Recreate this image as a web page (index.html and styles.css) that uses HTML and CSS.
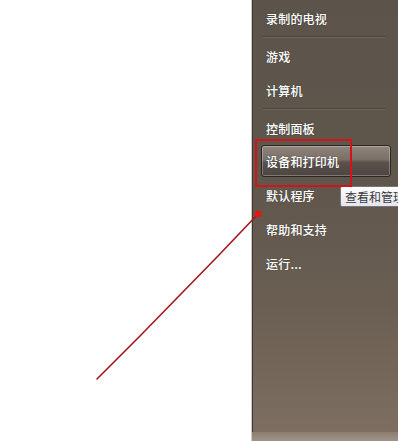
FILE: index.html
```html
<!DOCTYPE html>
<html>
<head>
<meta charset="utf-8">
<link rel="stylesheet" href="styles.css">
</head>
<body>
<div class="page">
  <div class="blank"></div>
  <div class="panel">
    <div class="item">录制的电视</div>
    <div class="sep"></div>
    <div class="item">游戏</div>
    <div class="item">计算机</div>
    <div class="sep"></div>
    <div class="item">控制面板</div>
    <div class="item active">设备和打印机</div>
    <div class="item">默认程序</div>
    <div class="item">帮助和支持</div>
    <div class="item">运行...</div>
    <div class="fill"></div>
    <div class="foot"></div>
  </div>
  <div class="tooltip">查看和管理</div>
  <div class="redbox"></div>
  <svg class="arrow" width="398" height="441" viewBox="0 0 398 441">
    <path d="M97 379 L140 336 L178 297 L218 256 L258 214" fill="none" stroke="#a8141c" stroke-width="1.6" stroke-linecap="round"/>
    <circle cx="258" cy="214" r="3.6" fill="#e01818"/>
  </svg>
</div>
</body>
</html>
```
FILE: styles.css
```css
html, body {
  margin: 0;
  padding: 0;
  background: #ffffff;
}
.page {
  position: relative;
  width: 398px;
  height: 441px;
  display: flex;
  overflow: hidden;
  font-family: "Noto Sans CJK SC", "Noto Sans", sans-serif;
}
.blank {
  width: 251px;
  flex: none;
  background: #ffffff;
}
.panel {
  flex: 1;
  display: flex;
  flex-direction: column;
  padding-top: 1px;
  border-left: 1px solid #cfcac4;
  box-shadow: inset 1px 0 0 #3e3731;
  background: linear-gradient(to bottom, #5c534a 0%, #5f564c 40%, #6b5f53 70%, #7e6f61 100%);
}
.item {
  height: 34px;
  display: flex;
  align-items: center;
  padding-left: 14px;
  font-size: 12px;
  font-weight: 500;
  color: #ffffff;
  letter-spacing: 0.2px;
  text-shadow: 0 0 1px rgba(0,0,0,0.7), 0 0 0.5px rgba(255,255,255,0.6);
  flex: none;
}
.item.active {
  height: 30px;
  margin: 0 7px 1px 9px;
  padding-left: 4px;
  border: 1px solid #2c2622;
  border-radius: 3px;
  box-shadow: inset 0 0 0 1px rgba(255,255,255,0.28);
  background: linear-gradient(to bottom, #8f857c 0%, #7a7067 45%, #5a514a 55%, #4d4540 100%);
}
.sep {
  height: 4px;
  flex: none;
  margin: 0 13px 0 11px;
  display: flex;
  flex-direction: column;
  justify-content: center;
}
.sep::before {
  content: "";
  height: 1px;
  background: #4a423b;
}
.sep::after {
  content: "";
  height: 1px;
  background: #6f665c;
}
.fill {
  flex: 1;
}
.foot {
  height: 9px;
  flex: none;
  background: linear-gradient(to bottom, #8a7d70, #a09487);
}
.tooltip {
  position: absolute;
  left: 340px;
  top: 186px;
  height: 19px;
  padding: 0 6px 0 4px;
  display: flex;
  align-items: center;
  white-space: nowrap;
  font-size: 12px;
  color: #3a3a3a;
  border: 1px solid #767676;
  border-radius: 2px;
  background: linear-gradient(to bottom, #ffffff, #e4e5f0);
}
.redbox {
  position: absolute;
  left: 255px;
  top: 139px;
  width: 93px;
  height: 44px;
  border: 2px solid #d4121a;
}
.arrow {
  position: absolute;
  left: 0;
  top: 0;
  pointer-events: none;
}
```
